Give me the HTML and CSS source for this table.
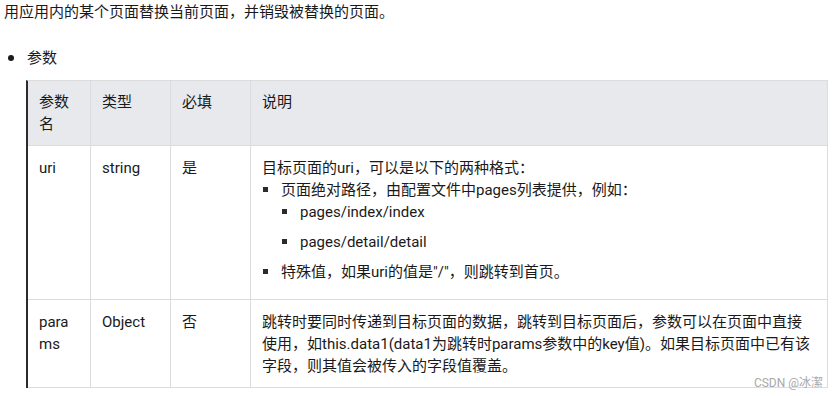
FILE: index.html
```html
<!DOCTYPE html>
<html lang="zh-CN">
<head>
<meta charset="utf-8">
<link rel="stylesheet" href="styles.css">
</head>
<body>
<p class="intro">用应用内的某个页面替换当前页面，并销毁被替换的页面。</p>
<ul class="disc-list">
  <li>参数</li>
</ul>
<table class="params">
  <thead>
    <tr>
      <th class="c1">参数名</th>
      <th class="c2">类型</th>
      <th class="c3">必填</th>
      <th>说明</th>
    </tr>
  </thead>
  <tbody>
    <tr>
      <td>uri</td>
      <td>string</td>
      <td>是</td>
      <td>
        <div>目标页面的uri，可以是以下的两种格式：</div>
        <ul class="sq-list outer">
          <li><span>页面绝对路径，由配置文件中pages列表提供，例如：</span>
            <ul class="sq-list nested">
              <li><span>pages/index/index</span></li>
              <li><span>pages/detail/detail</span></li>
            </ul>
          </li>
          <li><span>特殊值，如果uri的值是"/"，则跳转到首页。</span></li>
        </ul>
      </td>
    </tr>
    <tr>
      <td>params</td>
      <td>Object</td>
      <td>否</td>
      <td>跳转时要同时传递到目标页面的数据，跳转到目标页面后，参数可以在页面中直接使用，如this.data1(data1为跳转时params参数中的key值)。如果目标页面中已有该字段，则其值会被传入的字段值覆盖。</td>
    </tr>
  </tbody>
</table>
<div class="watermark">CSDN @冰潔</div>
</body>
</html>
```
FILE: styles.css
```css
* { box-sizing: border-box; }
html, body { background: #ffffff; }
body {
  margin: 0;
  padding: 1px 0 0 4px;
  font-family: Roboto, "Noto Sans CJK SC", sans-serif;
  font-size: 15px;
  line-height: 22px;
  color: #1a1a1a;
  position: relative;
  width: 839px;
  height: 396px;
  overflow: hidden;
}
.intro { margin: 0; }
.disc-list {
  list-style: none;
  margin: 24px 0 0 0;
  padding: 0 0 0 4px;
}
.disc-list li { display: flex; align-items: center; }
.disc-list li::before {
  content: "";
  width: 6px;
  height: 6px;
  border-radius: 50%;
  background: #1a1a1a;
  margin-right: 13px;
  flex: none;
}
.params {
  margin: 11px 0 0 22px;
  width: 802px;
  table-layout: fixed;
  border-collapse: separate;
  border-spacing: 0;
  border-top: 1px solid #dcdcdc;
  border-left: 2px solid #2b2b2b;
}
.params th, .params td {
  text-align: left;
  vertical-align: top;
  font-weight: normal;
  border-right: 1px solid #dcdcdc;
  border-bottom: 1px solid #dcdcdc;
  padding: 11px 11px 10px 11px;
  word-break: break-all;
}
.params th {
  background: #e8e9ec;
  padding-top: 10px;
}
.params .c1 { width: 63px; }
.params .c2 { width: 80px; }
.params .c3 { width: 80px; }
.sq-list {
  list-style: none;
  margin: 0;
  padding: 0;
}
.sq-list.outer { margin-bottom: 6px; }
.sq-list.nested { margin-left: 19px; }
.sq-list li + li { margin-top: 8px; }
.sq-list li > span {
  display: flex;
  align-items: center;
}
.sq-list li > span::before {
  content: "";
  width: 5px;
  height: 5px;
  background: #2b2b2b;
  margin: 0 13px 0 1px;
  flex: none;
  position: relative;
  top: -1px;
}
.watermark {
  position: absolute;
  right: 16px;
  top: 375px;
  font-size: 12px;
  line-height: 16px;
  color: #a8a8a8;
}
```
